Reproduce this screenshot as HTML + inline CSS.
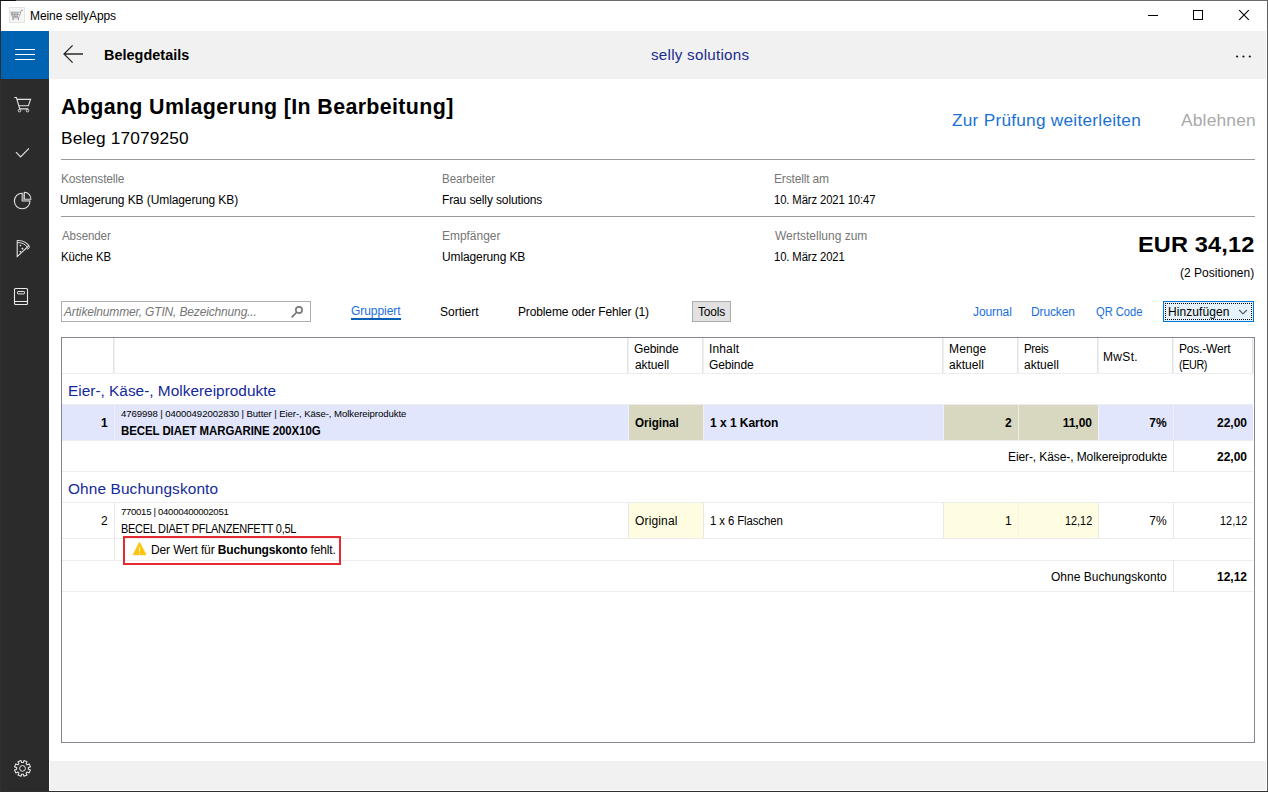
<!DOCTYPE html>
<html lang="de">
<head>
<meta charset="utf-8">
<title>Meine sellyApps</title>
<style>
html,body{margin:0;padding:0;background:#fff;}
body{width:1268px;height:792px;overflow:hidden;font-family:"Liberation Sans",sans-serif;}
#w{position:relative;width:1268px;height:792px;overflow:hidden;background:#fff;}
#w div,#w span,#w svg{position:absolute;}
#w b{font-weight:700;}
.t{white-space:nowrap;}
.hl{height:1px;background:#ededed;}
.vl{width:1px;background:#e8e8e8;}
</style>
</head>
<body>
<div id="w">
<!-- window frame -->
<div style="left:0;top:0;width:1268px;height:1px;background:#6a6a6a"></div>
<div style="left:0;top:0;width:1px;height:792px;background:#303030"></div>
<div style="left:0;top:0;width:16px;height:1px;background:#111"></div>
<div style="left:1267px;top:0;width:1px;height:792px;background:#5f5f5f"></div>
<div style="left:0;top:791px;width:1268px;height:1px;background:#2e2e2e"></div>
<!-- title bar icon -->
<div style="left:9px;top:7px;width:16px;height:16px;background:#f6f6f6;box-shadow:inset 0 0 0 1px #e4e4e4"></div>
<svg style="left:9px;top:7px" width="16" height="16" viewBox="0 0 16 16"><path d="M1.9 5.2h8.6M2 5.2l1.2 4.4h6.3M3.4 5.4l0.6 4M5.2 5.4l0.3 4M7 5.4l-0.1 4M8.8 5.4l-0.5 4M2.6 7.4h7.4M10.4 9.4l1.8-6.1h1.8M3.2 10.8h7M4 10.8v1.2M9.4 10.8v1.2" fill="none" stroke="#9a9a9a" stroke-width="0.9"/><circle cx="4.2" cy="12.4" r="0.8" fill="#9a9a9a"/><circle cx="9.4" cy="12.4" r="0.8" fill="#9a9a9a"/></svg>
<!-- window controls -->
<div style="left:1148px;top:15px;width:10px;height:1px;background:#000"></div>
<div style="left:1193px;top:10px;width:8px;height:8px;border:1px solid #000"></div>
<svg style="left:1238px;top:9px" width="12" height="12" viewBox="0 0 12 12"><path d="M1.2 1.2l9.6 9.6M10.8 1.2l-9.6 9.6" stroke="#000" stroke-width="1.1" fill="none"/></svg>
<!-- header -->
<div style="left:50px;top:31px;width:1216px;height:48px;background:#f1f1f1"></div>
<div style="left:1px;top:31px;width:48px;height:48px;background:#0063b1"></div>
<div style="left:15px;top:49px;width:20px;height:1px;background:#fff"></div>
<div style="left:15px;top:54px;width:20px;height:1px;background:#fff"></div>
<div style="left:15px;top:59px;width:20px;height:1px;background:#fff"></div>
<svg style="left:60px;top:42px" width="28" height="24" viewBox="0 0 28 24"><path d="M23 12H4M12.6 3.4L4 12l8.6 8.6" fill="none" stroke="#2a2a2a" stroke-width="1.3"/></svg>
<svg style="left:1230px;top:50px" width="26" height="14" viewBox="0 0 26 14"><circle cx="7.1" cy="6.5" r="1.1" fill="#111"/><circle cx="13.45" cy="6.5" r="1.1" fill="#111"/><circle cx="19.8" cy="6.5" r="1.1" fill="#111"/></svg>
<!-- sidebar -->
<div style="left:1px;top:79px;width:48px;height:712px;background:#2b2b2b"></div>
<!-- cart -->
<svg style="left:12px;top:94px" width="22" height="22" viewBox="0 0 22 22"><path d="M2.2 3.5h2.2l3.3 11.4h8.6M5 5.4h13.6l-2.2 6.4H7" fill="none" stroke="#e2e2e2" stroke-width="1.1"/><circle cx="7.5" cy="16.6" r="1.3" fill="none" stroke="#e2e2e2" stroke-width="1"/><circle cx="15.5" cy="16.6" r="1.3" fill="none" stroke="#e2e2e2" stroke-width="1"/></svg>
<!-- check -->
<svg style="left:12px;top:142px" width="22" height="22" viewBox="0 0 22 22"><path d="M4 10.2l4.6 4.6L17 6.4" fill="none" stroke="#e2e2e2" stroke-width="1.2"/></svg>
<!-- pie -->
<svg style="left:11px;top:189px" width="24" height="24" viewBox="0 0 24 24"><path d="M11.2 4.2A7.8 7.8 0 1 0 19 12H11.2z" fill="none" stroke="#e2e2e2" stroke-width="1.1"/><path d="M13.3 3.3A6.7 6.7 0 0 1 19.9 10.2H13.3z" fill="none" stroke="#e2e2e2" stroke-width="1.1"/><path d="M12.2 4.4v6.9h6.8" fill="none" stroke="#9a9a9a" stroke-width="1.2"/></svg>
<!-- pizza -->
<svg style="left:12px;top:237px" width="22" height="24" viewBox="0 0 22 24"><path d="M5.2 4.2V19.6L17 8.6" fill="none" stroke="#e2e2e2" stroke-width="1.1"/><path d="M4.8 3.6c5.6-0.4 10.2 2 12.6 6.2" fill="none" stroke="#e2e2e2" stroke-width="1.1"/><path d="M5.4 5.6c4.6-0.2 8 1.6 10 4.8" fill="none" stroke="#e2e2e2" stroke-width="1"/><path d="M17.4 9.8c0 1.4-1 2.4-2.6 2.2" fill="none" stroke="#e2e2e2" stroke-width="1"/><rect x="7.6" y="7.8" width="1.5" height="1.5" fill="#e2e2e2" transform="rotate(45 8.35 8.55)"/><rect x="9.6" y="10.8" width="1.7" height="1.7" fill="#e2e2e2" transform="rotate(45 10.45 11.65)"/><rect x="7.6" y="14" width="1.5" height="1.5" fill="#e2e2e2" transform="rotate(45 8.35 14.75)"/></svg>
<!-- book -->
<svg style="left:12px;top:286px" width="20" height="22" viewBox="0 0 20 22"><rect x="2.5" y="2.5" width="13" height="16" rx="1" fill="none" stroke="#e8e8e8" stroke-width="1.1"/><path d="M2.5 15.5h13" stroke="#e8e8e8" stroke-width="1"/><rect x="5.5" y="5.5" width="7" height="2.4" rx="0.6" fill="none" stroke="#e8e8e8" stroke-width="1"/></svg>
<!-- gear -->
<svg style="left:12px;top:758px" width="22" height="22" viewBox="0 0 22 22"><path d="M11.34 4.56L12.04 2.50L15.00 3.72L14.04 5.68L15.22 6.86L17.18 5.90L18.40 8.86L16.34 9.56L16.34 11.24L18.40 11.94L17.18 14.90L15.22 13.94L14.04 15.12L15.00 17.08L12.04 18.30L11.34 16.24L9.66 16.24L8.96 18.30L6.00 17.08L6.96 15.12L5.78 13.94L3.82 14.90L2.60 11.94L4.66 11.24L4.66 9.56L2.60 8.86L3.82 5.90L5.78 6.86L6.96 5.68L6.00 3.72L8.96 2.50L9.66 4.56z" stroke-linejoin="round" fill="none" stroke="#e8e8e8" stroke-width="1.1"/><circle cx="10.5" cy="10.4" r="2.9" fill="none" stroke="#e8e8e8" stroke-width="1"/></svg>
<!-- footer -->
<div style="left:50px;top:761px;width:1216px;height:29px;background:#f1f1f1"></div>
<!-- content rules -->
<div style="left:61px;top:159px;width:1194px;height:1px;background:#9a9a9a"></div>
<div style="left:61px;top:216px;width:1194px;height:1px;background:#9a9a9a"></div>
<!-- search box -->
<div style="left:61px;top:301px;width:248px;height:19px;border:1px solid #abadb3;background:#fff"></div>
<svg style="left:288px;top:303px" width="18" height="18" viewBox="0 0 18 18"><circle cx="10.95" cy="6.95" r="3.15" fill="none" stroke="#787878" stroke-width="1.65"/><path d="M8.6 9.4L4.1 13.9" stroke="#787878" stroke-width="1.7" stroke-linecap="round"/></svg>
<!-- gruppiert underline -->
<div style="left:351px;top:318px;width:50px;height:2px;background:#0a60b4"></div>
<!-- tools button -->
<div style="left:692px;top:301px;width:37px;height:19px;border:1px solid #adadad;background:#e1e1e1"></div>
<!-- hinzufuegen -->
<div style="left:1163px;top:301px;width:89px;height:19px;border:1px solid #0078d7;background:#e5f1fb"></div>
<div style="left:1165px;top:303px;width:85px;height:15px;border:1px dotted #000"></div>
<svg style="left:1236px;top:306px" width="14" height="10" viewBox="0 0 14 10"><path d="M3.2 4L7 7.8L10.8 4" fill="none" stroke="#505050" stroke-width="1.1"/></svg>
<!-- table -->
<div style="left:61px;top:337px;width:1192px;height:404px;border:1px solid #828790;background:#fff"></div>
<!-- header seps -->
<div style="left:113px;top:338px;width:2px;height:35px;background:linear-gradient(to right,#e3e3e3 50%,#f1f1f1 50%)"></div>
<div style="left:627px;top:338px;width:2px;height:35px;background:linear-gradient(to right,#e3e3e3 50%,#f1f1f1 50%)"></div>
<div style="left:702px;top:338px;width:2px;height:35px;background:linear-gradient(to right,#e3e3e3 50%,#f1f1f1 50%)"></div>
<div style="left:942px;top:338px;width:2px;height:35px;background:linear-gradient(to right,#e3e3e3 50%,#f1f1f1 50%)"></div>
<div style="left:1017px;top:338px;width:2px;height:35px;background:linear-gradient(to right,#e3e3e3 50%,#f1f1f1 50%)"></div>
<div style="left:1097px;top:338px;width:2px;height:35px;background:linear-gradient(to right,#e3e3e3 50%,#f1f1f1 50%)"></div>
<div style="left:1172px;top:338px;width:2px;height:35px;background:linear-gradient(to right,#e3e3e3 50%,#f1f1f1 50%)"></div>
<div style="left:1252px;top:338px;width:2px;height:35px;background:linear-gradient(to right,#e3e3e3 50%,#f1f1f1 50%)"></div>
<div class="hl" style="left:62px;top:373px;width:1191px"></div>
<!-- group 1 -->
<div class="hl" style="left:62px;top:404px;width:1191px"></div>
<div style="left:62px;top:405px;width:1191px;height:35px;background:#e1e6fc"></div>
<div style="left:629px;top:405px;width:74px;height:35px;background:#d8d8c0"></div>
<div style="left:944px;top:405px;width:154px;height:35px;background:#d8d8c0"></div>
<div class="vl" style="left:114px;top:405px;height:35px;background:#eef0fb"></div>
<div class="vl" style="left:628px;top:405px;height:35px;background:#eef0fb"></div>
<div class="vl" style="left:703px;top:405px;height:35px;background:#eef0fb"></div>
<div class="vl" style="left:943px;top:405px;height:35px;background:#eef0fb"></div>
<div class="vl" style="left:1018px;top:405px;height:35px;background:#eeeee4"></div>
<div class="vl" style="left:1098px;top:405px;height:35px;background:#eef0fb"></div>
<div class="vl" style="left:1173px;top:405px;height:35px;background:#eef0fb"></div>
<div class="hl" style="left:62px;top:440px;width:1191px"></div>
<div class="vl" style="left:1173px;top:441px;height:30px"></div>
<div class="hl" style="left:62px;top:471px;width:1191px"></div>
<!-- group 2 -->
<div class="hl" style="left:62px;top:502px;width:1191px"></div>
<div style="left:629px;top:503px;width:74px;height:35px;background:#fffde1"></div>
<div style="left:944px;top:503px;width:154px;height:35px;background:#fffde1"></div>
<div class="vl" style="left:114px;top:503px;height:57px"></div>
<div class="vl" style="left:628px;top:503px;height:35px"></div>
<div class="vl" style="left:703px;top:503px;height:35px"></div>
<div class="vl" style="left:943px;top:503px;height:35px"></div>
<div class="vl" style="left:1018px;top:503px;height:35px;background:#f4f3e4"></div>
<div class="vl" style="left:1098px;top:503px;height:35px"></div>
<div class="vl" style="left:1173px;top:503px;height:35px"></div>
<div class="hl" style="left:62px;top:538px;width:1191px"></div>
<div class="hl" style="left:62px;top:560px;width:1191px"></div>
<div class="vl" style="left:1173px;top:561px;height:30px"></div>
<div class="hl" style="left:62px;top:591px;width:1191px"></div>
<!-- error box -->
<div style="left:123px;top:536px;width:214px;height:25px;border:2px solid #e52b31"></div>
<svg style="left:132px;top:541px" width="16" height="15" viewBox="0 0 16 15"><path d="M7.5 1.3L1.2 13.7h12.8z" fill="#ffc20a" stroke="#ffc20a" stroke-width="0.8" stroke-linejoin="round"/><path d="M7.5 6v4.6M7.5 11.5v1.3" stroke="#fff6d8" stroke-width="1"/></svg>

<!-- text -->
<span class="t" id="t0" style="top:6.84px;font-size:12px;line-height:18px;color:#000;letter-spacing:-0.092px;left:30.00px;">Meine sellyApps</span>
<span class="t" id="t1" style="top:44.01px;font-size:14.4px;line-height:22px;color:#000;font-weight:700;letter-spacing:0.046px;left:104.00px;">Belegdetails</span>
<span class="t" id="t2" style="top:43.23px;font-size:15.2px;line-height:23px;color:#1a2c8e;letter-spacing:0.251px;left:651.00px;">selly solutions</span>
<span class="t" id="t3" style="top:90.58px;font-size:21.4px;line-height:32px;color:#000;font-weight:700;letter-spacing:0.363px;left:61.00px;">Abgang Umlagerung [In Bearbeitung]</span>
<span class="t" id="t4" style="top:125.68px;font-size:16.8px;line-height:25px;color:#000;letter-spacing:0.127px;left:61.00px;transform:scaleX(1.03);transform-origin:0 0;">Beleg 17079250</span>
<span class="t" id="t5" style="top:108.25px;font-size:16.6px;line-height:25px;color:#1a72d4;letter-spacing:0.233px;left:952.00px;transform:scaleX(1.04);transform-origin:0 0;">Zur Prüfung weiterleiten</span>
<span class="t" id="t6" style="top:108.25px;font-size:16.6px;line-height:25px;color:#a9a9a9;letter-spacing:0.144px;left:1181.00px;transform:scaleX(1.05);transform-origin:0 0;">Ablehnen</span>
<span class="t" id="t7" style="top:169.84px;font-size:12px;line-height:18px;color:#767676;letter-spacing:-0.173px;left:61.00px;">Kostenstelle</span>
<span class="t" id="t8" style="top:190.84px;font-size:12px;line-height:18px;color:#000;letter-spacing:-0.092px;left:60.00px;">Umlagerung KB (Umlagerung KB)</span>
<span class="t" id="t9" style="top:169.84px;font-size:12px;line-height:18px;color:#767676;letter-spacing:0.004px;left:442.00px;transform:scaleX(0.96);transform-origin:0 0;">Bearbeiter</span>
<span class="t" id="t10" style="top:190.84px;font-size:12px;line-height:18px;color:#000;letter-spacing:-0.126px;left:442.00px;">Frau selly solutions</span>
<span class="t" id="t11" style="top:169.84px;font-size:12px;line-height:18px;color:#767676;letter-spacing:-0.172px;left:774.00px;">Erstellt am</span>
<span class="t" id="t12" style="top:190.84px;font-size:12px;line-height:18px;color:#000;letter-spacing:-0.120px;left:774.00px;transform:scaleX(0.94);transform-origin:0 0;">10. März 2021 10:47</span>
<span class="t" id="t13" style="top:226.84px;font-size:12px;line-height:18px;color:#767676;letter-spacing:-0.078px;left:62.00px;transform:scaleX(0.96);transform-origin:0 0;">Absender</span>
<span class="t" id="t14" style="top:247.84px;font-size:12px;line-height:18px;color:#000;letter-spacing:-0.101px;left:61.00px;transform:scaleX(0.95);transform-origin:0 0;">Küche KB</span>
<span class="t" id="t15" style="top:226.84px;font-size:12px;line-height:18px;color:#767676;letter-spacing:-0.034px;left:442.00px;">Empfänger</span>
<span class="t" id="t16" style="top:247.84px;font-size:12px;line-height:18px;color:#000;letter-spacing:-0.117px;left:442.00px;">Umlagerung KB</span>
<span class="t" id="t17" style="top:226.84px;font-size:12px;line-height:18px;color:#767676;letter-spacing:-0.013px;left:775.00px;">Wertstellung zum</span>
<span class="t" id="t18" style="top:247.84px;font-size:12px;line-height:18px;color:#000;letter-spacing:-0.117px;left:774.00px;transform:scaleX(0.94);transform-origin:0 0;">10. März 2021</span>
<span class="t" id="t19" style="top:228.38px;font-size:22px;line-height:33px;color:#000;font-weight:700;letter-spacing:0.142px;left:1138.00px;transform:scaleX(1.07);transform-origin:0 0;">EUR 34,12</span>
<span class="t" id="t20" style="top:263.84px;font-size:12px;line-height:18px;color:#000;letter-spacing:0.012px;left:1180.00px;">(2 Positionen)</span>
<span class="t" id="t21" style="top:302.84px;font-size:12px;line-height:18px;color:#767676;font-style:italic;letter-spacing:-0.154px;left:64.00px;">Artikelnummer, GTIN, Bezeichnung...</span>
<span class="t" id="t22" style="top:301.84px;font-size:12px;line-height:18px;color:#1a6fd8;letter-spacing:-0.050px;left:351.00px;">Gruppiert</span>
<span class="t" id="t23" style="top:302.84px;font-size:12px;line-height:18px;color:#000;letter-spacing:-0.011px;left:440.00px;">Sortiert</span>
<span class="t" id="t24" style="top:302.84px;font-size:12px;line-height:18px;color:#000;letter-spacing:-0.131px;left:518.00px;">Probleme oder Fehler (1)</span>
<span class="t" id="t25" style="top:302.84px;font-size:12px;line-height:18px;color:#000;letter-spacing:-0.168px;left:698.00px;">Tools</span>
<span class="t" id="t26" style="top:302.84px;font-size:12px;line-height:18px;color:#1a6fd8;letter-spacing:-0.080px;left:973.00px;">Journal</span>
<span class="t" id="t27" style="top:302.84px;font-size:12px;line-height:18px;color:#1a6fd8;letter-spacing:-0.127px;left:1031.00px;">Drucken</span>
<span class="t" id="t28" style="top:302.84px;font-size:12px;line-height:18px;color:#1a6fd8;letter-spacing:-0.011px;left:1096.00px;transform:scaleX(0.93);transform-origin:0 0;">QR Code</span>
<span class="t" id="t29" style="top:302.84px;font-size:12px;line-height:18px;color:#000;letter-spacing:0.068px;left:1168.00px;">Hinzufügen</span>
<span class="t" id="t30" style="top:339.84px;font-size:12px;line-height:18px;color:#000;letter-spacing:-0.125px;left:634.00px;">Gebinde</span>
<span class="t" id="t31" style="top:355.84px;font-size:12px;line-height:18px;color:#000;letter-spacing:-0.077px;left:635.00px;">aktuell</span>
<span class="t" id="t32" style="top:339.84px;font-size:12px;line-height:18px;color:#000;letter-spacing:0.140px;left:709.00px;">Inhalt</span>
<span class="t" id="t33" style="top:355.84px;font-size:12px;line-height:18px;color:#000;letter-spacing:-0.125px;left:709.00px;">Gebinde</span>
<span class="t" id="t34" style="top:339.84px;font-size:12px;line-height:18px;color:#000;letter-spacing:0.139px;left:949.00px;">Menge</span>
<span class="t" id="t35" style="top:355.84px;font-size:12px;line-height:18px;color:#000;letter-spacing:0.030px;left:949.00px;">aktuell</span>
<span class="t" id="t36" style="top:339.84px;font-size:12px;line-height:18px;color:#000;letter-spacing:-0.303px;left:1024.00px;transform:scaleX(0.95);transform-origin:0 0;">Preis</span>
<span class="t" id="t37" style="top:355.84px;font-size:12px;line-height:18px;color:#000;letter-spacing:0.030px;left:1024.00px;">aktuell</span>
<span class="t" id="t38" style="top:347.84px;font-size:12px;line-height:18px;color:#000;letter-spacing:0.341px;left:1103.00px;">MwSt.</span>
<span class="t" id="t39" style="top:339.84px;font-size:12px;line-height:18px;color:#000;letter-spacing:-0.186px;left:1179.00px;">Pos.-Wert</span>
<span class="t" id="t40" style="top:355.84px;font-size:12px;line-height:18px;color:#000;letter-spacing:-0.436px;left:1179.00px;transform:scaleX(0.9);transform-origin:0 0;">(EUR)</span>
<span class="t" id="t41" style="top:379.16px;font-size:15.4px;line-height:23px;color:#14299a;letter-spacing:0.005px;left:68.00px;">Eier-, Käse-, Molkereiprodukte</span>
<span class="t" id="t42" style="top:413.84px;font-size:12px;line-height:18px;color:#000;font-weight:700;right:1160.40px;">1</span>
<span class="t" id="t43" style="top:406.67px;font-size:9.6px;line-height:14px;color:#000;letter-spacing:-0.082px;left:121.00px;">4769998 | 04000492002830 | Butter | Eier-, Käse-, Molkereiprodukte</span>
<span class="t" id="t44" style="top:421.84px;font-size:12px;line-height:18px;color:#000;font-weight:700;letter-spacing:-0.075px;left:121.00px;transform:scaleX(0.955);transform-origin:0 0;">BECEL DIAET MARGARINE 200X10G</span>
<span class="t" id="t45" style="top:413.84px;font-size:12px;line-height:18px;color:#000;font-weight:700;letter-spacing:-0.048px;left:635.00px;transform:scaleX(0.97);transform-origin:0 0;">Original</span>
<span class="t" id="t46" style="top:413.84px;font-size:12px;line-height:18px;color:#000;font-weight:700;letter-spacing:-0.030px;left:710.00px;">1 x 1 Karton</span>
<span class="t" id="t47" style="top:413.84px;font-size:12px;line-height:18px;color:#000;font-weight:700;right:256.40px;">2</span>
<span class="t" id="t48" style="top:413.84px;font-size:12px;line-height:18px;color:#000;font-weight:700;right:176.00px;">11,00</span>
<span class="t" id="t49" style="top:413.84px;font-size:12px;line-height:18px;color:#000;font-weight:700;right:101.40px;">7%</span>
<span class="t" id="t50" style="top:413.84px;font-size:12px;line-height:18px;color:#000;font-weight:700;right:21.00px;">22,00</span>
<span class="t" id="t51" style="top:447.84px;font-size:12px;line-height:18px;color:#000;letter-spacing:-0.096px;left:1008.00px;">Eier-, Käse-, Molkereiprodukte</span>
<span class="t" id="t52" style="top:447.84px;font-size:12px;line-height:18px;color:#000;font-weight:700;right:21.00px;">22,00</span>
<span class="t" id="t53" style="top:477.16px;font-size:15.4px;line-height:23px;color:#14299a;letter-spacing:0.120px;left:68.00px;">Ohne Buchungskonto</span>
<span class="t" id="t54" style="top:511.84px;font-size:12px;line-height:18px;color:#000;right:1160.40px;">2</span>
<span class="t" id="t55" style="top:504.67px;font-size:9.6px;line-height:14px;color:#000;letter-spacing:-0.308px;left:121.00px;">770015 | 04000400002051</span>
<span class="t" id="t56" style="top:519.84px;font-size:12px;line-height:18px;color:#000;letter-spacing:-0.289px;left:121.00px;transform:scaleX(0.915);transform-origin:0 0;">BECEL DIAET PFLANZENFETT 0,5L</span>
<span class="t" id="t57" style="top:511.84px;font-size:12px;line-height:18px;color:#000;letter-spacing:0.155px;left:635.00px;">Original</span>
<span class="t" id="t58" style="top:511.84px;font-size:12px;line-height:18px;color:#000;letter-spacing:-0.110px;left:710.00px;transform:scaleX(0.95);transform-origin:0 0;">1 x 6 Flaschen</span>
<span class="t" id="t59" style="top:511.84px;font-size:12px;line-height:18px;color:#000;right:256.40px;">1</span>
<span class="t" id="t60" style="top:511.84px;font-size:12px;line-height:18px;color:#000;letter-spacing:0.034px;left:1065.00px;transform:scaleX(0.9);transform-origin:0 0;">12,12</span>
<span class="t" id="t61" style="top:511.84px;font-size:12px;line-height:18px;color:#000;right:101.40px;">7%</span>
<span class="t" id="t62" style="top:511.84px;font-size:12px;line-height:18px;color:#000;letter-spacing:0.081px;left:1220.00px;transform:scaleX(0.9);transform-origin:0 0;">12,12</span>
<span class="t" id="t63" style="top:540.84px;font-size:12px;line-height:18px;color:#000;letter-spacing:-0.133px;left:151.00px;">Der Wert für <b>Buchungskonto</b> fehlt.</span>
<span class="t" id="t64" style="top:567.84px;font-size:12px;line-height:18px;color:#000;letter-spacing:0.021px;left:1051.00px;">Ohne Buchungskonto</span>
<span class="t" id="t65" style="top:567.84px;font-size:12px;line-height:18px;color:#000;font-weight:700;right:21.00px;">12,12</span>
</div>
</body>
</html>
